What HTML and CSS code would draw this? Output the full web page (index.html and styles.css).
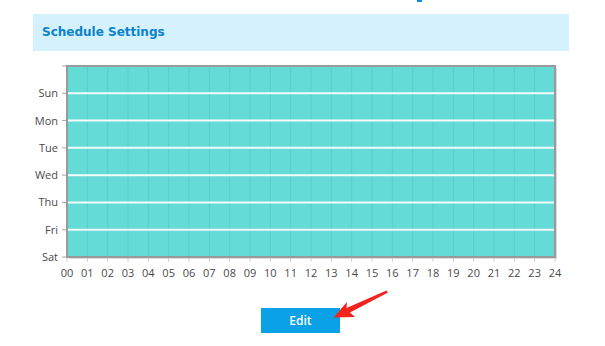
FILE: index.html
```html
<!doctype html>
<html>
<head>
<meta charset="UTF-8">
<meta name="viewport" content="width=device-width, initial-scale=1">
<link rel="stylesheet" href="styles.css">
</head>
<body>
<div class="top-mark"></div>
<div class="panel-title">Schedule Settings</div>

<div class="schedule-chart">
<svg id="chart" width="605" height="232" viewBox="0 58 605 232"></svg>
</div>

<div class="actions">
  <button class="btn-edit">Edit</button>
</div>

<svg class="pointer" width="60" height="34" viewBox="330 288 60 34">
  <path d="M333.5 317.5 L347 302 L346.5 308 L386.5 290.5 L388 292.5 L350 312.5 L355 317 Z" fill="#f2231d"/>
</svg>

<script>
var svg = document.getElementById('chart');
var ns = 'http://www.w3.org/2000/svg';
var left = 67, right = 555, top_ = 66, bottom = 257;
var days = ['Sun','Mon','Tue','Wed','Thu','Fri','Sat'];

function el(name, attrs, text){
	var e = document.createElementNS(ns, name);
	for (var k in attrs) e.setAttribute(k, attrs[k]);
	if (text) e.textContent = text;
	svg.appendChild(e);
	return e;
}

// shadow and plot area
el('rect', {x:left+2, y:top_+2, width:right-left, height:bottom-top_, fill:'#dcdcdc'});
el('rect', {x:left, y:top_, width:right-left, height:bottom-top_, fill:'#65dbd7'});

var step = (right-left)/24;
for (var i=0;i<=24;i++){
	var x = left + i*step;
	if (i>0 && i<24) el('line', {x1:x, y1:top_, x2:x, y2:bottom, stroke:'#58cfcb', 'stroke-width':1});
	el('line', {x1:x, y1:bottom+1, x2:x, y2:bottom+5, stroke:'#cfcfcf', 'stroke-width':1});
	el('text', {x:x, y:bottom+20, 'class':'hour'}, ('0'+i).slice(-2));
}

var row = (bottom-top_)/7;
el('line', {x1:left-5, y1:top_, x2:left, y2:top_, stroke:'#aaa', 'stroke-width':1});
for (var d=1; d<=7; d++){
	var y = top_ + d*row;
	if (d<7) el('line', {x1:left, y1:y, x2:right, y2:y, stroke:'#f4fbfb', 'stroke-width':2});
	el('line', {x1:left-5, y1:y, x2:left, y2:y, stroke:'#aaa', 'stroke-width':1});
	el('text', {x:left-9, y:y+4, 'class':'day'}, days[d-1]);
}

// frame
el('rect', {x:left, y:top_, width:right-left, height:bottom-top_, fill:'none', stroke:'#9a9a9a', 'stroke-width':2});
</script>
</body>
</html>
```

FILE: styles.css
```css
body{
  margin: 0;
  padding: 0;
  background: #fff;
  font-family: "DejaVu Sans", Verdana, sans-serif;
  position: relative;
}

.top-mark{
  position: absolute;
  left: 417px;
  top: 0;
  width: 5px;
  height: 2px;
  background: #0a8fd8;
}

.panel-title{
  margin: 14px 36px 0 33px;
  height: 37px;
  line-height: 37px;
  padding-left: 9px;
  background: #d4f1fd;
  color: #0a82cc;
  font-size: 12px;
  font-weight: bold;
}

.schedule-chart{
  margin-top: 7px;
  height: 232px;
}

.schedule-chart svg{
  display: block;
}

.hour, .day{
  font-family: "Open Sans", "Noto Sans", sans-serif;
  font-size: 11px;
  fill: #4a4a4a;
}

.hour{
  text-anchor: middle;
}

.day{
  text-anchor: end;
}

.actions{
  padding: 18px 0 0 261px;
}

.btn-edit{
  display: block;
  width: 79px;
  height: 25px;
  border: 0;
  padding: 0;
  background: #0aa1e6;
  color: #fff;
  font-family: "Open Sans", "Noto Sans", sans-serif;
  font-size: 12px;
  font-weight: 600;
}

.pointer{
  position: absolute;
  left: 330px;
  top: 288px;
}
```
